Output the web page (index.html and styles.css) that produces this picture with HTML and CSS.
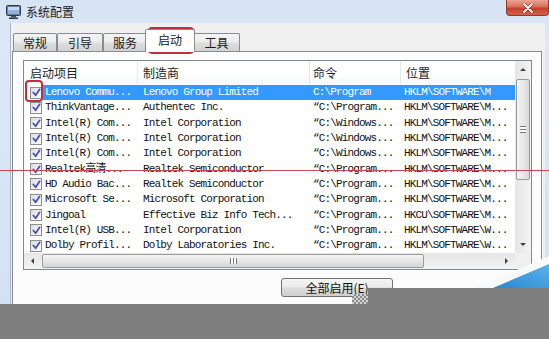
FILE: index.html
```html
<!DOCTYPE html>
<html lang="zh-CN">
<head>
<meta charset="utf-8">
<title>系统配置</title>
<link rel="stylesheet" href="styles.css">
</head>
<body>
<div class="window">
  <div class="titlebar">
    <svg class="appicon" viewBox="0 0 15 14" width="15" height="14">
      <rect x="0.5" y="0.5" width="14" height="10" rx="1" fill="#6f7f95" stroke="#2e3a4a"/>
      <rect x="2" y="2" width="11" height="7" fill="#8fb3de"/>
      <rect x="2" y="2" width="11" height="3" fill="#c4daf2"/>
      <rect x="5" y="11" width="5" height="1.5" fill="#44505f"/>
      <rect x="3" y="12.5" width="9" height="1.5" fill="#2e3a4a"/>
    </svg>
    <span class="title">系统配置</span>
    <div class="close">
      <svg viewBox="0 0 12 10" width="12" height="10">
        <path d="M2 1 L10 9 M10 1 L2 9" stroke="#7a2418" stroke-width="3" stroke-linecap="round"/>
        <path d="M2 1 L10 9 M10 1 L2 9" stroke="#ffffff" stroke-width="1.8" stroke-linecap="round"/>
      </svg>
    </div>
  </div>
  <div class="frame">
    <div class="client">
      <div class="tabs">
        <div class="tab w1">常规</div>
        <div class="tab w2">引导</div>
        <div class="tab w3">服务</div>
        <div class="tab active">启动</div>
        <div class="tab w5">工具</div>
      </div>
      <div class="panel">
        <div class="listview">
          <div class="lv-main">
            <div class="lv-header">
              <div class="hcell h1">启动项目</div>
              <div class="hcell h2">制造商</div>
              <div class="hcell h3">命令</div>
              <div class="hcell h4">位置</div>
            </div>
            <div class="lv-rows">
              <div class="row sel"><div class="cb"><span class="box"><svg viewBox="0 0 10 10"><path d="M1.5 5 L4 8 L8.5 1.5" class="tick"/></svg></span></div><div class="cell c1">Lenovo Commu...</div><div class="cell c2">Lenovo Group Limited</div><div class="cell c3">C:\Program</div><div class="cell c4">HKLM\SOFTWARE\M</div></div>
              <div class="row"><div class="cb"><span class="box"><svg viewBox="0 0 10 10"><path d="M1.5 5 L4 8 L8.5 1.5" class="tick"/></svg></span></div><div class="cell c1">ThinkVantage...</div><div class="cell c2">Authentec Inc.</div><div class="cell c3">“C:\Program...</div><div class="cell c4">HKLM\SOFTWARE\M...</div></div>
              <div class="row"><div class="cb"><span class="box"><svg viewBox="0 0 10 10"><path d="M1.5 5 L4 8 L8.5 1.5" class="tick"/></svg></span></div><div class="cell c1">Intel(R) Com...</div><div class="cell c2">Intel Corporation</div><div class="cell c3">“C:\Windows...</div><div class="cell c4">HKLM\SOFTWARE\M...</div></div>
              <div class="row"><div class="cb"><span class="box"><svg viewBox="0 0 10 10"><path d="M1.5 5 L4 8 L8.5 1.5" class="tick"/></svg></span></div><div class="cell c1">Intel(R) Com...</div><div class="cell c2">Intel Corporation</div><div class="cell c3">“C:\Windows...</div><div class="cell c4">HKLM\SOFTWARE\M...</div></div>
              <div class="row"><div class="cb"><span class="box"><svg viewBox="0 0 10 10"><path d="M1.5 5 L4 8 L8.5 1.5" class="tick"/></svg></span></div><div class="cell c1">Intel(R) Com...</div><div class="cell c2">Intel Corporation</div><div class="cell c3">“C:\Windows...</div><div class="cell c4">HKLM\SOFTWARE\M...</div></div>
              <div class="row"><div class="cb"><span class="box"><svg viewBox="0 0 10 10"><path d="M1.5 5 L4 8 L8.5 1.5" class="tick"/></svg></span></div><div class="cell c1">Realtek高清...</div><div class="cell c2">Realtek Semiconductor</div><div class="cell c3">“C:\Program...</div><div class="cell c4">HKLM\SOFTWARE\M...</div></div>
              <div class="row"><div class="cb"><span class="box"><svg viewBox="0 0 10 10"><path d="M1.5 5 L4 8 L8.5 1.5" class="tick"/></svg></span></div><div class="cell c1">HD Audio Bac...</div><div class="cell c2">Realtek Semiconductor</div><div class="cell c3">“C:\Program...</div><div class="cell c4">HKLM\SOFTWARE\M...</div></div>
              <div class="row"><div class="cb"><span class="box"><svg viewBox="0 0 10 10"><path d="M1.5 5 L4 8 L8.5 1.5" class="tick"/></svg></span></div><div class="cell c1">Microsoft Se...</div><div class="cell c2">Microsoft Corporation</div><div class="cell c3">“C:\Program...</div><div class="cell c4">HKLM\SOFTWARE\M...</div></div>
              <div class="row"><div class="cb"><span class="box"><svg viewBox="0 0 10 10"><path d="M1.5 5 L4 8 L8.5 1.5" class="tick"/></svg></span></div><div class="cell c1">Jingoal</div><div class="cell c2">Effective Biz Info Tech...</div><div class="cell c3">“C:\Program...</div><div class="cell c4">HKCU\SOFTWARE\M...</div></div>
              <div class="row"><div class="cb"><span class="box"><svg viewBox="0 0 10 10"><path d="M1.5 5 L4 8 L8.5 1.5" class="tick"/></svg></span></div><div class="cell c1">Intel(R) USB...</div><div class="cell c2">Intel Corporation</div><div class="cell c3">“C:\Program...</div><div class="cell c4">HKLM\SOFTWARE\W...</div></div>
              <div class="row"><div class="cb"><span class="box"><svg viewBox="0 0 10 10"><path d="M1.5 5 L4 8 L8.5 1.5" class="tick"/></svg></span></div><div class="cell c1">Dolby Profil...</div><div class="cell c2">Dolby Laboratories Inc.</div><div class="cell c3">“C:\Program...</div><div class="cell c4">HKLM\SOFTWARE\W...</div></div>
            </div>
          </div>
          <div class="vscroll">
            <div class="sbtn"><span class="arr up"></span></div>
            <div class="vthumb"><span class="vgrip"></span></div>
            <div class="vtrack"></div>
            <div class="sbtn"><span class="arr down"></span></div>
          </div>
          <div class="hscroll">
            <div class="hbtn"><span class="arr left"></span></div>
            <div class="hthumb"><span class="hgrip"></span></div>
            <div class="htrack"></div>
            <div class="hbtn"><span class="arr right"></span></div>
          </div>
          <div class="corner"></div>
        </div>
        <div class="buttons">
          <div class="btn">全部启用(<u>E</u>)</div>
        </div>
      </div>
    </div>
  </div>
</div>

<div class="redline"></div>
<div class="hl hl-tab"></div>
<div class="hl hl-cb"></div>
<svg class="corner-art" viewBox="0 0 79 38" width="79" height="38">
  <defs>
    <linearGradient id="bl" x1="0" y1="1" x2="1" y2="0">
      <stop offset="0" stop-color="#2a86cf"/>
      <stop offset="1" stop-color="#5bb2ea"/>
    </linearGradient>
  </defs>
  <polygon points="5,38 79,6 79,38" fill="#f7f9fb"/>
  <polygon points="23,38 79,14 79,38" fill="url(#bl)"/>
</svg>
<div class="grey grey-a"></div>
<div class="grey grey-b"></div>
<div class="checker"></div>
</body>
</html>
```
FILE: styles.css
```css
html, body {
  margin: 0;
  padding: 0;
}

body {
  width: 549px;
  height: 339px;
  overflow: hidden;
  position: relative;
  background: #d3e2f3;
  font-family: "Noto Sans CJK SC", "Liberation Sans", sans-serif;
  font-size: 12px;
  color: #1a1a1a;
}

.window {
  display: flex;
  flex-direction: column;
  height: 339px;
  background: linear-gradient(#d6e3f3, #dde8f5 40px, #d2e1f2);
}

/* title bar */
.titlebar {
  height: 23px;
  display: flex;
  align-items: center;
  padding-left: 6px;
  flex: none;
}

.appicon {
  flex: none;
}

.title {
  margin-left: 5px;
  line-height: 1;
  color: #1c1c1c;
}

.close {
  margin-left: auto;
  align-self: flex-start;
  width: 43px;
  height: 16px;
  box-sizing: border-box;
  border: 1px solid #8f3b2c;
  border-top: none;
  border-radius: 0 0 4px 4px;
  background: linear-gradient(#eba494, #d9705c 45%, #c2412b 55%, #d5624a);
  display: flex;
  align-items: center;
  justify-content: center;
}

/* frame & client */
.frame {
  flex: 1;
  display: flex;
  padding: 0 4px 0 10px;
}

.client {
  flex: 1;
  display: flex;
  flex-direction: column;
  background: #f0f0f0;
  border-left: 1px solid #aab6c6;
  padding: 10px 3px 0 1px;
}

/* tabs */
.tabs {
  display: flex;
  align-items: flex-end;
  height: 18px;
  padding-left: 1px;
  position: relative;
  z-index: 1;
  flex: none;
}

.tab {
  height: 18px;
  box-sizing: border-box;
  border: 1px solid #898c95;
  border-bottom: none;
  border-radius: 2px 2px 0 0;
  background: linear-gradient(#f4f4f4, #ececec 48%, #dedede 52%, #d2d2d2);
  display: flex;
  align-items: center;
  justify-content: center;
  line-height: 1;
  color: #1a1a1a;
  flex: none;
}

.w1 { width: 44px; }
.w2 { width: 46px; }
.w3 { width: 44px; }
.w5 { width: 47px; }

.tab.active {
  width: 50px;
  height: 23px;
  margin: 0 -2px -1px;
  padding-bottom: 3px;
  background: #ffffff;
  position: relative;
  z-index: 2;
}

/* panel */
.panel {
  flex: 1;
  width: 530px;
  box-sizing: border-box;
  border: 1px solid #898c95;
  border-bottom: none;
  background: #fcfcfc;
  padding: 8px 9px 0 10px;
}

/* list view */
.listview {
  width: 509px;
  box-sizing: border-box;
  border: 1px solid #828790;
  background: #ffffff;
  display: grid;
  grid-template-columns: 491px 16px;
  grid-template-rows: auto 16px;
}

.lv-main {
  grid-column: 1;
  grid-row: 1;
}

.lv-header {
  display: grid;
  grid-template-columns: 114px 172px 91px 114px;
  height: 23px;
}

.hcell {
  display: flex;
  align-items: center;
  box-sizing: border-box;
  border-right: 1px solid #e3e6ea;
  background: linear-gradient(#ffffff, #ffffff 55%, #f5f7f9);
  line-height: 1;
  color: #1e1e1e;
}

.h1 { padding-left: 6px; }
.h2 { padding-left: 5px; }
.h3 { padding-left: 3px; }
.h4 { padding-left: 5px; border-right: none; }

.lv-rows {
  padding-top: 1px;
}

.row {
  display: grid;
  grid-template-columns: 19px 95px 172px 91px 114px;
  height: 15.3px;
  font-family: "Liberation Mono", "Noto Sans CJK SC", monospace;
  font-size: 11px;
  letter-spacing: -0.85px;
  color: #111111;
}

.cb {
  display: flex;
  align-items: center;
  padding-left: 6px;
}

.box {
  width: 12px;
  height: 12px;
  box-sizing: border-box;
  border: 1px solid #8e8f8f;
  background: linear-gradient(135deg, #d8dce4, #ffffff);
  display: flex;
  align-items: center;
  justify-content: center;
}

.box svg {
  width: 9px;
  height: 9px;
}

.tick {
  fill: none;
  stroke: #4a52b8;
  stroke-width: 2;
  stroke-linecap: round;
  stroke-linejoin: round;
}

.cell {
  display: flex;
  align-items: center;
  white-space: nowrap;
  overflow: hidden;
  line-height: 1;
}

.c1 { padding-left: 2px; }
.c2 { padding-left: 5px; }
.c3 { padding-left: 3px; }
.c4 { padding-left: 3px; }

.row.sel .cell {
  background: #3399ff;
  color: #ffffff;
}

/* scroll bars */
.vscroll {
  grid-column: 2;
  grid-row: 1;
  display: flex;
  flex-direction: column;
  background: linear-gradient(90deg, #e6e6e6, #f3f3f3);
}

.sbtn {
  height: 17px;
  flex: none;
  display: flex;
  align-items: center;
  justify-content: center;
}

.vthumb {
  height: 101px;
  margin: 1px 1px;
  box-sizing: border-box;
  border: 1px solid #9b9b9b;
  border-radius: 2px;
  background: linear-gradient(90deg, #f4f4f4, #e8e8e8 50%, #d8d8d8);
  display: flex;
  align-items: center;
  justify-content: center;
  flex: none;
}

.vgrip {
  width: 6px;
  height: 5px;
  border-top: 1px solid #777;
  border-bottom: 1px solid #777;
  background: linear-gradient(#fff 0 2px, #777 2px 3px, #fff 3px);
}

.vtrack {
  flex: 1;
}

.hscroll {
  grid-column: 1;
  grid-row: 2;
  display: flex;
  background: linear-gradient(#e6e6e6, #f3f3f3);
}

.hbtn {
  width: 17px;
  flex: none;
  display: flex;
  align-items: center;
  justify-content: center;
}

.hthumb {
  width: 382px;
  margin: 1px 0 1px 1px;
  box-sizing: border-box;
  border: 1px solid #9b9b9b;
  border-radius: 2px;
  background: linear-gradient(#f4f4f4, #e6e6e6 50%, #d6d6d6);
  display: flex;
  align-items: center;
  justify-content: center;
  flex: none;
}

.hgrip {
  width: 5px;
  height: 6px;
  border-left: 1px solid #777;
  border-right: 1px solid #777;
  background: linear-gradient(90deg, #fff 0 2px, #777 2px 3px, #fff 3px);
}

.htrack {
  flex: 1;
}

.corner {
  grid-column: 2;
  grid-row: 2;
  background: #f0f0f0;
}

.arr {
  width: 0;
  height: 0;
  border: 3px solid transparent;
}

.arr.up { border-bottom: 3px solid #404040; border-top-width: 0; }
.arr.down { border-top: 3px solid #404040; border-bottom-width: 0; }
.arr.left { border-right: 3px solid #404040; border-left-width: 0; }
.arr.right { border-left: 3px solid #404040; border-right-width: 0; }

/* buttons */
.buttons {
  display: flex;
  gap: 8px;
  padding-left: 258px;
  margin-top: 8px;
}

.btn {
  width: 112px;
  height: 19px;
  box-sizing: border-box;
  border: 1px solid #707070;
  border-radius: 3px;
  background: linear-gradient(#f4f4f4, #ebebeb 48%, #dddddd 52%, #cfcfcf);
  display: flex;
  align-items: center;
  justify-content: center;
  line-height: 1;
  color: #111;
}

.btn u {
  text-decoration: underline;
}

/* overlays drawn over the screenshot */
.redline {
  position: absolute;
  left: 0;
  top: 170px;
  width: 549px;
  height: 1px;
  background: #cc4656;
}

.hl {
  position: absolute;
  box-sizing: border-box;
  border: 2px solid #c0303c;
}

.hl-tab {
  left: 147px;
  top: 27px;
  width: 48px;
  height: 27px;
  border-radius: 5px;
}

.hl-cb {
  left: 25px;
  top: 80px;
  width: 18px;
  height: 22px;
  border-radius: 4px;
}

.corner-art {
  position: absolute;
  left: 470px;
  top: 250px;
}

.grey {
  position: absolute;
  background: #7f7f7f;
}

.grey-a {
  left: 0;
  top: 304px;
  width: 549px;
  height: 35px;
}

.grey-b {
  left: 368px;
  top: 288px;
  width: 181px;
  height: 16px;
}

.checker {
  position: absolute;
  left: 352px;
  top: 294px;
  width: 16px;
  height: 10px;
  background: repeating-conic-gradient(#8a8a8a 0 25%, #d4d4d4 0 50%) 0 0 / 4px 4px;
}
```
